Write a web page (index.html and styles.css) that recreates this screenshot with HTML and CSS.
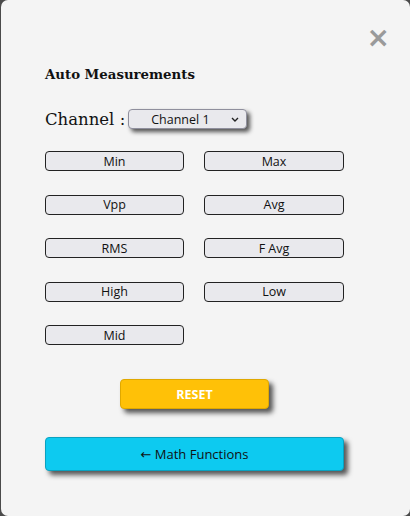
FILE: index.html
```html
<!DOCTYPE html>
<html>
<head>
<meta charset="utf-8">
<link rel="stylesheet" href="styles.css">
</head>
<body>
<div class="modal">
  <div class="close-row"><span class="close">&times;</span></div>
  <h5 class="title">Auto Measurements</h5>
  <div class="channel-row">
    <span class="channel-label">Channel :</span>
    <div class="select">
      <span class="select-text">Channel 1</span>
      <svg class="chev" width="8" height="5" viewBox="0 0 8 5"><path d="M1 1 L4 4 L7 1" fill="none" stroke="#222" stroke-width="1.4"/></svg>
    </div>
  </div>
  <div class="grid">
    <button class="mbtn">Min</button>
    <button class="mbtn">Max</button>
    <button class="mbtn">Vpp</button>
    <button class="mbtn">Avg</button>
    <button class="mbtn">RMS</button>
    <button class="mbtn">F Avg</button>
    <button class="mbtn">High</button>
    <button class="mbtn">Low</button>
    <button class="mbtn">Mid</button>
  </div>
  <div class="reset-row"><button class="reset">RESET</button></div>
  <button class="math"><span class="arrow">&larr;</span> Math Functions</button>
</div>
</body>
</html>
```
FILE: styles.css
```css
html, body {
  margin: 0;
  padding: 0;
}
body {
  background: #4a4a4a;
  width: 410px;
  height: 516px;
  overflow: hidden;
}
.modal {
  box-sizing: border-box;
  margin-left: 1px;
  width: 409px;
  height: 516px;
  background: #f4f4f4;
  border-radius: 7px;
  padding: 0 0 0 44px;
  font-family: "Open Sans", "Noto Sans", sans-serif;
}
.close-row {
  display: flex;
  justify-content: flex-end;
  padding-top: 24px;
  padding-right: 20px;
  height: 30px;
}
.close {
  font-family: "DejaVu Sans", sans-serif;
  font-size: 28px;
  line-height: 28px;
  font-weight: bold;
  color: #9a9a9a;
}
.title {
  margin: 13px 0 0 0;
  font-family: "DejaVu Serif", serif;
  font-weight: bold;
  font-size: 13.3px;
  line-height: 16px;
  color: #111;
}
.channel-row {
  display: flex;
  align-items: center;
  margin-top: 26px;
  height: 20px;
}
.channel-label {
  font-family: "DejaVu Serif", serif;
  font-size: 16.5px;
  color: #111;
  margin-right: 3px;
}
.select {
  box-sizing: border-box;
  width: 119px;
  height: 20px;
  background: #e9e9ed;
  border: 1px solid #8f8f9d;
  border-radius: 4px;
  box-shadow: 3px 3px 4px #555;
  display: flex;
  align-items: center;
  padding: 0 7px 0 22px;
  font-size: 12.5px;
  color: #111;
}
.select-text {
  flex: 1;
}
.chev {
  display: block;
}
.grid {
  margin-top: 22px;
  display: grid;
  grid-template-columns: 139px 140px;
  column-gap: 20px;
  row-gap: 23.5px;
}
.mbtn {
  box-sizing: border-box;
  height: 20px;
  background: #e9e9ed;
  border: 1px solid #222;
  border-radius: 4px;
  font-family: "Open Sans", "Noto Sans", sans-serif;
  font-size: 12.5px;
  color: #111;
  padding: 0;
  line-height: 17px;
}
.reset-row {
  margin-top: 34px;
  padding-left: 75px;
}
.reset {
  box-sizing: border-box;
  width: 149px;
  height: 30px;
  background: #ffc107;
  border: 1px solid #e0a800;
  border-radius: 4px;
  color: #fff;
  font-family: "Open Sans", "Noto Sans", sans-serif;
  font-weight: bold;
  font-size: 12.5px;
  box-shadow: 4px 4px 5px #555;
  display: block;
}
.math {
  display: block;
  box-sizing: border-box;
  margin-top: 28px;
  width: 299px;
  height: 34px;
  background: #0dcaf0;
  border: 1px solid #0aa2c0;
  border-radius: 4px;
  color: #111;
  font-family: "Open Sans", "Noto Sans", sans-serif;
  font-size: 13px;
  box-shadow: 4px 4px 5px #555;
}
.arrow {
  font-family: "DejaVu Sans", sans-serif;
}
```
